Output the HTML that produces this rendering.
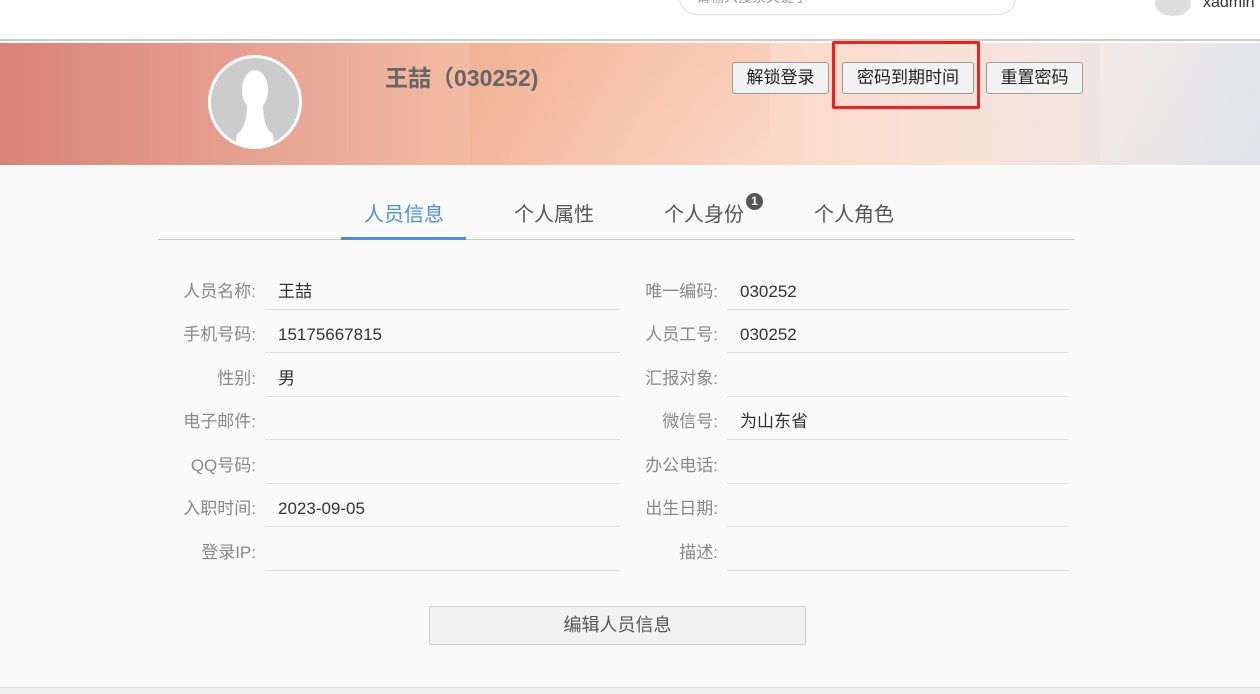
<!DOCTYPE html>
<html><head><meta charset="utf-8"><style>
*{margin:0;padding:0;box-sizing:border-box}
body{width:1260px;height:694px;overflow:hidden;background:#fafafa;font-family:"Liberation Sans","Noto Sans CJK SC",sans-serif;position:relative}
.top{position:absolute;left:0;top:0;width:1260px;height:41px;background:#fff;border-bottom:2px solid #ccc}
.search{position:absolute;left:679px;top:-20px;width:337px;height:35px;border:1px solid #ddd;border-radius:18px;background:#fff;color:#999;font-size:14px;padding:6px 16px}
.banner{position:absolute;left:0;top:43px;width:1260px;height:122px;background:linear-gradient(90deg,#d9837a 0%,#e6a291 20%,#f2b8a0 35%,#f9cdb8 50%,#fbdccd 65%,#f6e3dc 80%,#e6e6e8 100%);overflow:hidden}
.avatar{position:absolute;left:208px;top:55px;width:94px;height:94px;border-radius:50%;background:#ccc;border:3px solid #fff;overflow:hidden}
.name{position:absolute;left:385px;top:64px;font-size:23px;line-height:28px;font-weight:bold;color:#666}
.vline{position:absolute;left:347px;top:56px;width:1px;height:96px;background:#e8b8a8}
.btn{position:absolute;top:62px;height:32px;border:1px solid #999;border-radius:3px;background:#f2f2f2;font-size:17px;color:#222;text-align:center;line-height:30px}
.red{position:absolute;left:832px;top:41px;width:148px;height:68px;border:3px solid #f0211a;border-radius:2px}
.tab{position:absolute;top:202px;font-size:20px;line-height:26px;color:#555}
.tabline{position:absolute;left:158px;top:239px;width:917px;height:1px;background:#ccc}
.lab{position:absolute;font-size:17px;line-height:20px;color:#888;text-align:right;width:120px}
.val{position:absolute;font-size:17px;line-height:20px;color:#333}
.ul{position:absolute;height:1px;background:#ddd}
.ebtn{position:absolute;left:429px;top:606px;width:377px;height:39px;border:1px solid #ccc;border-radius:2px;background:#f2f2f2;font-size:18px;color:#555;text-align:center;line-height:37px}
</style></head><body>
<div class="top"><div class="search">请输入搜索关键字</div>
<div style="position:absolute;left:1155px;top:-10px;width:36px;height:26px;border-radius:50%;background:#ddd"></div>
<div style="position:absolute;left:1203px;top:-6px;font-size:16px;color:#333">xadmin</div></div>
<div class="banner">
<div style="position:absolute;left:470px;top:0;width:300px;height:122px;background:linear-gradient(160deg,rgba(240,160,120,.35),rgba(255,255,255,0))"></div>
<div style="position:absolute;left:1100px;top:0;width:160px;height:122px;background:linear-gradient(120deg,rgba(255,255,255,.2),rgba(220,225,230,.6))"></div>
</div>
<div class="vline"></div>
<div class="avatar"><svg width="88" height="88" viewBox="0 0 88 88"><ellipse cx="44" cy="32" rx="13" ry="20" fill="#fff"/><path d="M36 46 L52 46 Q52 70 62 76 L64 88 L24 88 L26 76 Q36 70 36 46 Z" fill="#fff"/></svg></div>
<div class="name">王喆（030252)</div>
<div class="btn" style="left:732px;width:97px">解锁登录</div>
<div class="btn" style="left:842px;width:132px">密码到期时间</div>
<div class="btn" style="left:986px;width:97px">重置密码</div>
<div class="red"></div>
<div class="tab" style="left:364px;color:#4a90e2">人员信息</div>
<div class="tab" style="left:514px">个人属性</div>
<div class="tab" style="left:664px">个人身份</div>
<div style="position:absolute;left:746px;top:193px;width:17px;height:17px;border-radius:50%;background:#555;color:#fff;font-size:12px;font-weight:bold;text-align:center;line-height:17px">1</div>
<div class="tab" style="left:814px">个人角色</div>
<div class="tabline"></div>
<div style="position:absolute;left:341px;top:237px;width:125px;height:3px;background:#4a90e2"></div>

<div class="lab" style="left:136px;top:282px">人员名称:</div><div class="val" style="left:278px;top:282px">王喆</div><div class="ul" style="left:265px;top:309px;width:355px"></div>
<div class="lab" style="left:136px;top:325px">手机号码:</div><div class="val" style="left:278px;top:325px">15175667815</div><div class="ul" style="left:265px;top:352px;width:355px"></div>
<div class="lab" style="left:136px;top:369px">性别:</div><div class="val" style="left:278px;top:369px">男</div><div class="ul" style="left:265px;top:396px;width:355px"></div>
<div class="lab" style="left:136px;top:412px">电子邮件:</div><div class="ul" style="left:265px;top:439px;width:355px"></div>
<div class="lab" style="left:136px;top:456px">QQ号码:</div><div class="ul" style="left:265px;top:483px;width:355px"></div>
<div class="lab" style="left:136px;top:499px">入职时间:</div><div class="val" style="left:278px;top:499px">2023-09-05</div><div class="ul" style="left:265px;top:526px;width:355px"></div>
<div class="lab" style="left:136px;top:543px">登录IP:</div><div class="ul" style="left:265px;top:570px;width:355px"></div>

<div class="lab" style="left:598px;top:282px">唯一编码:</div><div class="val" style="left:740px;top:282px">030252</div><div class="ul" style="left:727px;top:309px;width:342px"></div>
<div class="lab" style="left:598px;top:325px">人员工号:</div><div class="val" style="left:740px;top:325px">030252</div><div class="ul" style="left:727px;top:352px;width:342px"></div>
<div class="lab" style="left:598px;top:369px">汇报对象:</div><div class="ul" style="left:727px;top:396px;width:342px"></div>
<div class="lab" style="left:598px;top:412px">微信号:</div><div class="val" style="left:740px;top:412px">为山东省</div><div class="ul" style="left:727px;top:439px;width:342px"></div>
<div class="lab" style="left:598px;top:456px">办公电话:</div><div class="ul" style="left:727px;top:483px;width:342px"></div>
<div class="lab" style="left:598px;top:499px">出生日期:</div><div class="ul" style="left:727px;top:526px;width:342px"></div>
<div class="lab" style="left:598px;top:543px">描述:</div><div class="ul" style="left:727px;top:570px;width:342px"></div>

<div class="ebtn">编辑人员信息</div>
<div style="position:absolute;left:0;top:687px;width:1260px;height:7px;background:#eee;border-top:1px solid #ddd"></div>
</body></html>
